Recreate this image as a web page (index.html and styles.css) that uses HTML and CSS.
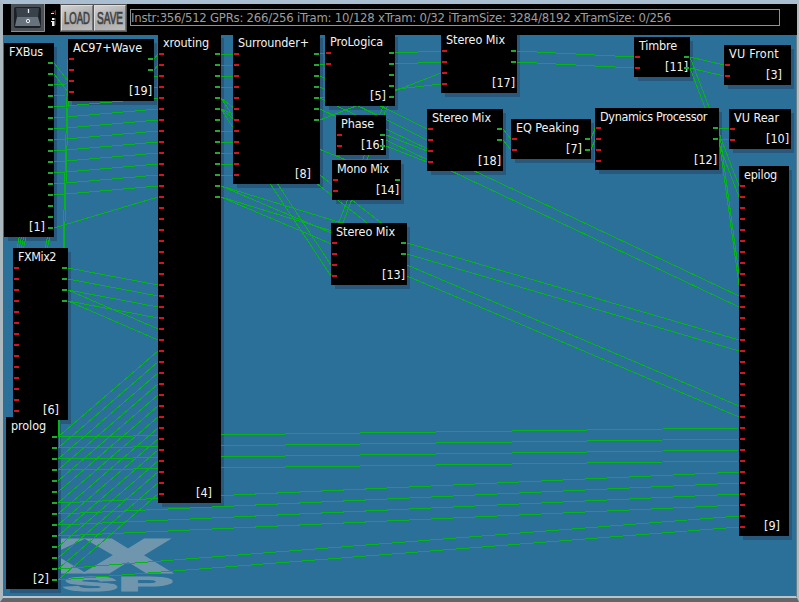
FILE: index.html
```html
<!DOCTYPE html>
<html lang="en">
<head>
<meta charset="utf-8">
<title>DSP routing</title>
<link rel="stylesheet" href="styles.css">
</head>
<body>
<div class="window">
  <header class="toolbar">
    <button class="power" aria-label="Power">
      <svg width="34" height="28" viewBox="0 0 34 28">
        <rect width="34" height="28" fill="#4c5157"/>
        <path d="M0 27.5H33.5V0" fill="none" stroke="#8b8f92"/>
        <rect x="3" y="3" width="27" height="21" rx="2" fill="#1c2025"/>
        <path d="M5 4H28L27 13H6Z" fill="#39414a"/>
        <path d="M6 13H27L29.500 22H4Z" fill="#66727e"/>
        <path d="M17.500 5V9" stroke="#eee" stroke-width="1.300"/>
        <circle cx="17" cy="17" r="1.700" fill="none" stroke="#eee"/>
      </svg>
    </button>
    <svg class="info" width="8" height="18" viewBox="0 0 8 18">
      <path d="M2 3H5M5.500 1V6" stroke="#9c2020" stroke-width="1"/>
      <path d="M1 4.500H4" stroke="#ddd"/>
      <path d="M2 9H4.500V11H2ZM1 12H4.500V17H2V13H1Z" fill="#eee"/>
      <path d="M5.500 9V16" stroke="#701818"/>
    </svg>
    <div class="buttons">
      <button class="btn"><svg width="32" height="26"><text x="3" y="18.500" textLength="26" lengthAdjust="spacingAndGlyphs">LOAD</text></svg></button>
      <button class="btn"><svg width="32" height="26"><text x="3" y="18.500" textLength="26" lengthAdjust="spacingAndGlyphs">SAVE</text></svg></button>
    </div>
    <div class="status"><span data-fit="540">Instr:356/512 GPRs: 266/256 iTram: 10/128 xTram: 0/32 iTramSize: 3284/8192 xTramSize: 0/256</span></div>
  </header>
  <main class="canvas" id="canvas">
    <svg class="logo" width="176" height="62" viewBox="0 0 176 62">
      <text x="10" y="37" class="big" textLength="71" lengthAdjust="spacingAndGlyphs">K</text>
      <text x="88" y="37" class="big" textLength="80" lengthAdjust="spacingAndGlyphs">X</text>
      <text x="63" y="55.500" class="small" textLength="110" lengthAdjust="spacingAndGlyphs">SP</text>
    </svg>
    <div id="shadows"></div>
    <svg class="wires" id="wires" width="799" height="602"></svg>
    <div id="nodes"></div>
  </main>
</div>
<script src="graph.js"></script>
</body>
</html>
```
FILE: styles.css
```css
* { box-sizing: border-box; }
body { margin: 0; overflow: hidden; background: #a9b8c3; font-family: "DejaVu Sans Condensed", "DejaVu Sans", sans-serif; font-stretch: condensed; font-size: 12.500px; }
.window { position: relative; width: 799px; height: 602px; display: flex; flex-direction: column; border-style: solid; border-width: 4px 2px 4px 3px; border-color: #aabed2 #b5babb #626668 #abb9bf; background: #2a7098; }
.toolbar { height: 31px; flex: none; display: flex; align-items: flex-start; padding: 0 17px 0 8px; background: #000; }
button { padding: 0; border: 0; display: block; background: none; }
.power { width: 34px; height: 28px; }
.power svg, .btn svg { display: block; }
.info { margin: 5px 0 0 5px; }
.buttons { display: flex; gap: 1px; margin-left: 2px; padding: 1px; background: #555; height: 28px; }
.btn { width: 32px; height: 26px; background: linear-gradient(160deg, #d2d2d2, #aaa 55%, #bebebe); border: 1px solid #ddd; border-right-color: #777; border-bottom-color: #777; }
.btn svg { margin: -1px; overflow: visible; }
.btn text { font: 17px "Liberation Sans", sans-serif; fill: #3c3c3c; stroke: #444; stroke-width: .7px; }
.status { flex: 1; height: 17px; margin: 5px 0 0 3px; border: 1px solid #929292; line-height: 15px; color: #9d9d9d; font-size: 13px; white-space: pre; }
.canvas { flex: 1; background: #2a7098; border-bottom: 2px solid #b9c5cb; border-right: 1px solid #657d8b; }
.logo { position: absolute; left: -3px; top: 531px; }
.logo text { font-family: "Liberation Sans", sans-serif; font-weight: bold; fill: #7096ae; stroke: #7096ae; }
.big { font-size: 46px; stroke-width: 3px; }
.small { font-size: 20.500px; stroke-width: 1.200px; }
.wires { position: absolute; left: -3px; top: -4px; stroke: #08b41c; stroke-width: 1; fill: none; shape-rendering: crispEdges; pointer-events: none; }
#shadows, #nodes { position: absolute; left: -3px; top: -4px; width: 799px; height: 602px; }
.shadow { position: absolute; background: #28587c; }
.node { position: absolute; background: #000; color: #f2f2f2; }
.title, .id { position: absolute; line-height: 14px; white-space: pre; }
.title { left: 5px; top: 2px; }
.id { right: 1px; bottom: 3px; width: 24px; }
.pin { position: absolute; width: 5px; height: 2px; }
.in { left: 1px; background: #cf1423; }
.out { right: 1px; background: #24a834; }
```
FILE: graph.js
```js
// x, y, width, height, title, title width, id, inputs, outputs
const nodes = [
  [4, 43, 50, 194, 'FXBus', 33, 1, 0, 16],
  [68, 39, 86, 62, 'AC97+Wave', 68, 19, 4, 2],
  [158, 34, 63, 469, 'xrouting', 45, 4, 41, 14],
  [233, 34, 87, 150, 'Surrounder+', 70, 8, 12, 7],
  [325, 33, 70, 73, 'ProLogica', 52, 5, 2, 5],
  [336, 115, 50, 40, 'Phase', 32, 16, 2, 2],
  [332, 160, 69, 40, 'Mono Mix', 51, 14, 2, 1],
  [331, 223, 76, 62, 'Stereo Mix', 58, 13, 4, 2],
  [441, 31, 76, 62, 'Stereo Mix', 58, 17, 4, 2],
  [427, 109, 76, 62, 'Stereo Mix', 58, 18, 4, 2],
  [511, 119, 80, 40, 'EQ Peaking', 62, 7, 2, 2],
  [595, 108, 124, 62, 'Dynamics Processor', 106, 12, 4, 2],
  [634, 37, 56, 40, 'Timbre', 37, 11, 2, 2],
  [724, 45, 67, 40, 'VU Front', 49, 3, 2, 0],
  [729, 109, 62, 40, 'VU Rear', 44, 10, 2, 0],
  [739, 166, 50, 370, 'epilog', 32, 9, 32, 0],
  [13, 248, 55, 172, 'FXMix2', 37, 6, 14, 4],
  [6, 417, 52, 172, 'prolog', 34, 2, 0, 14]
];

// x1, y1, x2, y2
const wires = [
  [54,63,68,81],[54,74,68,92],[54,228,158,197],
  [54,63,13,268],[54,74,13,279],[54,85,13,290],[54,96,13,301],[54,206,13,400],[54,217,13,411],
  [58,437,68,59],[59,448,69,70],[154,59,158,54],[154,70,158,65],
  [68,268,158,285],[68,279,158,296],[68,290,158,307],[68,290,158,329],[68,301,158,318],[68,301,158,340],
  [58,437,739,428],[58,448,739,439],[58,459,739,450],[58,470,739,461],[58,503,739,472],[58,514,739,483],
  [58,525,739,494],[58,536,739,505],[58,569,739,516],[58,580,739,527],
  [221,98,331,265],[221,109,331,276],[221,98,407,243],[221,109,407,254],[221,109,395,180],
  [221,186,739,406],[221,197,739,417],[221,186,407,243],[221,197,407,254],[407,243,739,340],[407,254,739,351],
  [320,54,325,53],[320,65,325,64],[320,76,427,129],[320,87,427,140],[320,98,739,296],[320,109,739,307],
  [320,120,441,73],[320,98,441,84],
  [395,53,441,51],[395,64,441,62],[395,75,331,243],[395,86,331,254],
  [386,135,427,151],[386,146,427,162],
  [517,51,634,57],[517,62,634,68],[690,57,724,65],[690,68,724,76],[690,57,739,186],[690,68,739,197],
  [503,129,511,139],[503,140,511,150],[591,139,595,128],[591,150,595,139],
  [719,128,729,129],[719,139,729,140],[719,128,739,274],[719,139,739,285]
];
for (let i = 2; i <= 12; i++) wires.push([54, 63 + 11 * i, 158, 54 + 11 * i]);
for (let i = 0; i < 14; i++) wires.push([58, 437 + 11 * i, 158, 351 + 11 * i]);
for (const i of [0, 1, 2, 3, 7, 8, 9, 10, 11]) wires.push([221, 54 + 11 * i, 233, 54 + 11 * i]);

const TOOLBAR_BOTTOM = 35;
function add(parent, cls, css, text) {
  const el = document.createElement('div');
  el.className = cls;
  if (css) el.style.cssText = css;
  if (text) el.textContent = text;
  parent.appendChild(el);
  return el;
}
// Spreads the letters of a label to the given width.
function fit(el, width) {
  const extra = width - el.getBoundingClientRect().width;
  el.style.letterSpacing = extra / el.textContent.length + 'px';
}

const layer = document.getElementById('nodes');
const shadows = document.getElementById('shadows');
for (const [x, y, w, h, title, tw, id, ins, outs] of nodes) {
  add(shadows, 'shadow', `left:${x + 4}px;top:${y + 4}px;width:${w - 1}px;height:${h}px`);
  const clip = Math.max(0, TOOLBAR_BOTTOM - y);
  const n = add(layer, 'node', `left:${x}px;top:${y}px;width:${w}px;height:${h}px;clip-path:inset(${clip}px 0 0 0)`);
  fit(add(n, 'title', '', title), tw + 1);
  add(n, 'id', '', `[${id}]`);
  for (let i = 0; i < ins; i++) add(n, 'pin in', `top:${19 + 11 * i}px`);
  for (let i = 0; i < outs; i++) add(n, 'pin out', `top:${19 + 11 * i}px`);
}
document.getElementById('wires').innerHTML =
  wires.map(([a, b, c, d]) => `<path d="M${a} ${b}L${c} ${d}"/>`).join('');
document.querySelectorAll('[data-fit]').forEach(el => fit(el, +el.dataset.fit));
```
